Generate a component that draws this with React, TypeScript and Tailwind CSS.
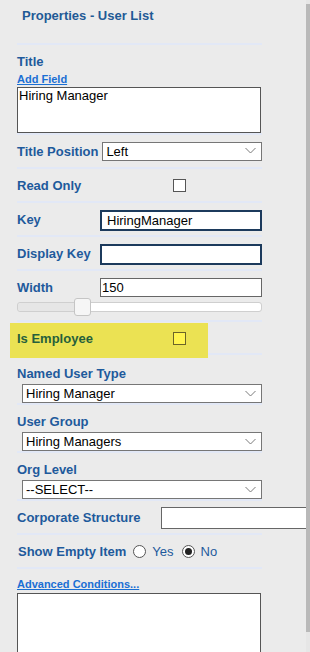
import React from 'react';

const label = 'text-[13px] leading-[15px] font-bold text-[#1e5a9c]';
const link = 'text-[11px] leading-[13px] font-bold text-[#1a6fd4] underline';

const Sep: React.FC = () => <div className="h-[2px] w-[245px] bg-[#e2e8f6]" />;

const Chevron: React.FC = () => (
  <svg className="pointer-events-none absolute right-[5px] top-1/2 -translate-y-1/2" width="11" height="7" viewBox="0 0 11 7">
    <polyline points="0.5,0.5 5.5,5.5 10.5,0.5" fill="none" stroke="#7a7a7a" strokeWidth="1" />
  </svg>
);

interface SelectProps {
  value: string;
  className: string;
}

const Select: React.FC<SelectProps> = ({ value, className }) => (
  <div className={`relative h-[19px] border border-[#767676] bg-white ${className}`}>
    <div className="pl-[3px] text-[13px] leading-[17px] text-black">{value}</div>
    <Chevron />
  </div>
);

const Checkbox: React.FC<{ yellow?: boolean }> = ({ yellow }) => (
  <div
    className={`h-[13px] w-[13px] border ${yellow ? 'border-[#6b6428] bg-[#fff44f]' : 'border-[#555] bg-white'}`}
  />
);

const Radio: React.FC<{ checked?: boolean }> = ({ checked }) => (
  <div className="flex h-[13px] w-[13px] items-center justify-center rounded-full border border-[#555] bg-white">
    {checked && <div className="h-[7px] w-[7px] rounded-full bg-[#222]" />}
  </div>
);

const App: React.FC = () => {
  return (
    <div className="flex h-[652px] w-[310px] overflow-hidden bg-[#ebebeb]" style={{ fontFamily: '"Liberation Sans", Arial, sans-serif' }}>
      <div className="w-[306px] shrink-0 overflow-hidden pl-[17px]">
        {/* header */}
        <div className="h-[43px] pl-[5px] pt-[8px]">
          <div className="text-[13px] leading-[15px] font-bold text-[#1f5a96]">Properties - User List</div>
        </div>
        <Sep />

        {/* Title */}
        <div className="h-[88px] pt-[9px]">
          <div className={label}>Title</div>
          <div className={`mt-[4px] ${link}`}>Add Field</div>
          <div className="mt-[1px] h-[46px] w-[244px] border border-[#555] bg-white px-[1px] text-[13px] leading-[15px] text-black">
            Hiring Manager
          </div>
        </div>
        <Sep />

        <div className="flex h-[32px] items-center">
          <div className={label}>Title Position</div>
          <Select value="Left" className="ml-[4px] w-[160px]" />
        </div>
        <Sep />

        <div className="flex h-[32px] items-center">
          <div className={`${label} w-[156px]`}>Read Only</div>
          <Checkbox />
        </div>
        <Sep />

        <div className="flex h-[32px] items-center">
          <div className={`${label} w-[83px]`}>Key</div>
          <div className="mt-[3px] h-[21px] w-[162px] border-2 border-[#1c3a5c] bg-white pl-[5px] text-[13px] leading-[17px] text-black">
            HiringManager
          </div>
        </div>
        <Sep />

        <div className="flex h-[32px] items-center">
          <div className={`${label} w-[83px]`}>Display Key</div>
          <div className="mt-[3px] h-[21px] w-[162px] border-2 border-[#1c3a5c] bg-white" />
        </div>
        <Sep />

        {/* Width + slider */}
        <div className="h-[49px] pt-[7px]">
          <div className="flex items-center">
            <div className={`${label} w-[83px]`}>Width</div>
            <div className="h-[19px] w-[162px] border border-[#666] bg-white pl-[1px] text-[13px] leading-[17px] text-black">150</div>
          </div>
          <div className="relative mt-[5px] flex h-[10px] w-[245px] overflow-visible rounded-[3px] border border-[#cfcfcf]">
            <div className="h-full w-[60px] rounded-l-[3px] bg-[#e6e6e6]" />
            <div className="h-full flex-1 rounded-r-[3px] bg-white" />
            <div className="absolute left-[56px] top-[-5px] h-[18px] w-[17px] rounded-[3px] border border-[#c5c5c5] bg-[#f6f6f6]" />
          </div>
        </div>
        <Sep />

        {/* Is Employee highlighted */}
        <div className="relative h-[31px]">
          <div className="absolute left-[-7px] top-[1px] h-[35px] w-[198px] bg-[#ebe253]" />
          <div className="relative flex h-full items-center pt-[2px]">
            <div className={`${label} w-[156px] text-[#26603c]`}>Is Employee</div>
            <Checkbox yellow />
          </div>
        </div>
        <Sep />

        <div className="h-[48px] pt-[11px]">
          <div className={label}>Named User Type</div>
          <Select value="Hiring Manager" className="ml-[5px] mt-[3px] w-[240px]" />
        </div>
        <Sep />

        <div className="h-[46px] pt-[9px]">
          <div className={label}>User Group</div>
          <Select value="Hiring Managers" className="ml-[5px] mt-[3px] w-[240px]" />
        </div>
        <Sep />

        <div className="h-[46px] pt-[9px]">
          <div className={label}>Org Level</div>
          <Select value="--SELECT--" className="ml-[5px] mt-[3px] w-[240px]" />
        </div>
        <Sep />

        <div className="flex h-[32px] items-center">
          <div className={`${label} w-[144px] shrink-0`}>Corporate Structure</div>
          <div className="mt-[1px] h-[22px] w-[160px] shrink-0 border border-[#666] bg-white" />
        </div>
        <Sep />

        <div className="flex h-[32px] items-center">
          <div className={`${label} ml-[1px]`}>Show Empty Item</div>
          <div className="ml-[7px]"><Radio /></div>
          <div className="ml-[6px] text-[13px] leading-[15px] text-[#1e5a9c]">Yes</div>
          <div className="ml-[8px]"><Radio checked /></div>
          <div className="ml-[6px] text-[13px] leading-[15px] text-[#1e5a9c]">No</div>
        </div>
        <Sep />

        <div className="pt-[9px]">
          <div className={link}>Advanced Conditions...</div>
          <div className="mt-[2px] h-[80px] w-[244px] border border-[#555] bg-white" />
        </div>
      </div>

      {/* scrollbar */}
      <div className="flex w-[4px] shrink-0 flex-col bg-[#e6e6e6]">
        <div className="h-[4px]" />
        <div className="h-[628px] bg-[#b9b9b9]" />
      </div>
    </div>
  );
};

export default App;
